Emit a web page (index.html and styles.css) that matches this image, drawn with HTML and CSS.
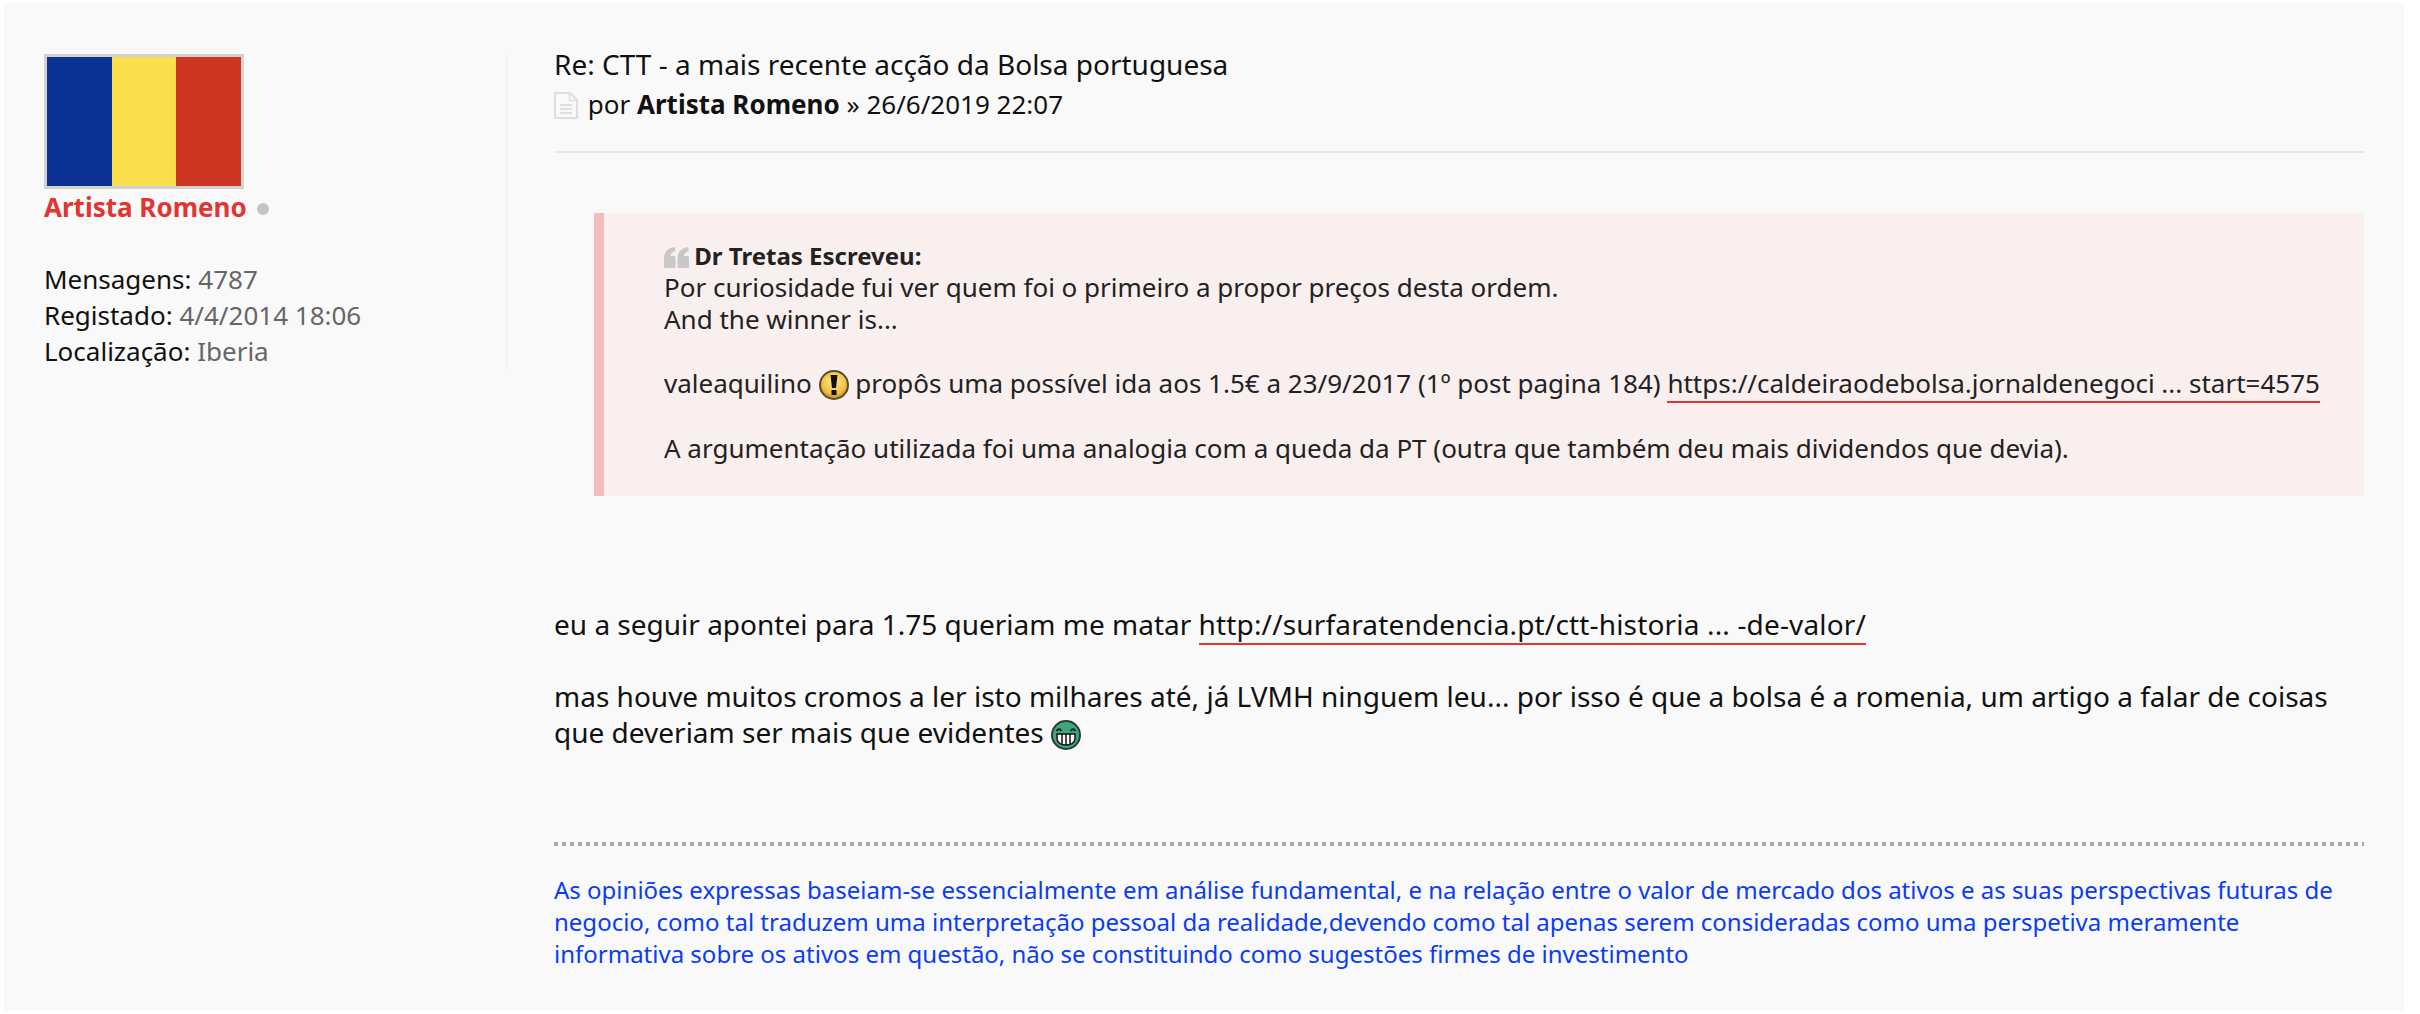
FILE: index.html
```html
<!DOCTYPE html>
<html lang="pt">
<head>
  <meta charset="UTF-8">
  <meta name="viewport" content="width=device-width, initial-scale=1.0">
  <title>Re: CTT - a mais recente acção da Bolsa portuguesa</title>
  <link rel="stylesheet" href="styles.css">
</head>
<body>
  <div class="post">
    <div class="profile">
      <div class="avatar">
        <span class="stripe blue"></span>
        <span class="stripe yellow"></span>
        <span class="stripe red"></span>
      </div>
      <div class="author"><a class="author-name">Artista Romeno</a><span class="status-dot"></span></div>
      <ul class="stats">
        <li>Mensagens: <span>4787</span></li>
        <li>Registado: <span>4/4/2014 18:06</span></li>
        <li>Localização: <span>Iberia</span></li>
      </ul>
    </div>

    <div class="post-main">
      <div class="post-head">
        <h3 class="post-title">Re: CTT - a mais recente acção da Bolsa portuguesa</h3>
        <p class="post-meta">
          <svg class="doc-icon" viewBox="0 0 24 27" width="24" height="27">
            <path d="M1 1h15l7 7v18H1z" fill="none" stroke="#dedede" stroke-width="2"/>
            <path d="M15.500 1v7.500h7.500" fill="none" stroke="#dedede" stroke-width="1.500"/>
            <path d="M6 13h12M6 17h12M6 21h12" stroke="#dedede" stroke-width="1.800"/>
          </svg>
          por <strong>Artista Romeno</strong> » 26/6/2019 22:07
        </p>
      </div>

      <blockquote class="quote">
        <cite class="quote-author">
          <svg class="quote-icon" viewBox="0 0 25 21" width="25" height="21">
            <path d="M0 12C0 6 3 1 11 0v4C8 5 6.500 7 6.500 9H10a1.500 1.500 0 0 1 1.500 1.500v9A1.500 1.500 0 0 1 10 21H1.500A1.500 1.500 0 0 1 0 19.500z" fill="#c8c8c8"/>
            <path d="M13.500 12c0-6 3-11 11-12v4c-3 1-4.500 3-4.500 5h3.500a1.500 1.500 0 0 1 1.500 1.500v9a1.500 1.500 0 0 1-1.500 1.500H15a1.500 1.500 0 0 1-1.500-1.500z" fill="#c8c8c8"/>
          </svg>
          Dr Tretas Escreveu:
        </cite>
        <div>Por curiosidade fui ver quem foi o primeiro a propor preços desta ordem.<br>
        And the winner is...<br><br>
        valeaquilino
        <svg class="smiley" viewBox="0 0 30 30" width="30" height="30">
          <defs>
            <radialGradient id="warn" cx="50%" cy="40%" r="60%">
              <stop offset="0" stop-color="#fdeb95"/>
              <stop offset="0.7" stop-color="#f3c040"/>
              <stop offset="1" stop-color="#b98722"/>
            </radialGradient>
          </defs>
          <circle cx="15" cy="15" r="14" fill="url(#warn)" stroke="#5e4a2c" stroke-width="2"/>
          <path d="M11.500 5h7l-1.500 13h-4z" fill="#111"/>
          <rect x="12.500" y="20" width="5" height="5" fill="#111"/>
        </svg>
        propôs uma possível ida aos 1.5€ a 23/9/2017 (1º post pagina 184) <a class="post-link">https://caldeiraodebolsa.jornaldenegoci ... start=4575</a><br><br>
        A argumentação utilizada foi uma analogia com a queda da PT (outra que também deu mais dividendos que devia).</div>
      </blockquote>

      <div class="post-body">
        eu a seguir apontei para 1.75 queriam me matar <a class="post-link">http://surfaratendencia.pt/ctt-historia ... -de-valor/</a><br><br>
        mas houve muitos cromos a ler isto milhares até, já LVMH ninguem leu... por isso é que a bolsa é a romenia, um artigo a falar de coisas que deveriam ser mais que evidentes
        <svg class="smiley" viewBox="0 0 30 30" width="30" height="30">
          <circle cx="15" cy="15" r="14" fill="#3fa77f" stroke="#2c3a36" stroke-width="2"/>
          <path d="M5.500 11q2.500-3.500 5 0M19.500 11q2.500-3.500 5 0" fill="none" stroke="#10201a" stroke-width="2"/>
          <path d="M6 14h18v5q-1 6-9 6t-9-6z" fill="#fff" stroke="#111" stroke-width="1.500"/>
          <path d="M11 14v10M15 14v11M19 14v10" stroke="#111" stroke-width="1.500"/>
        </svg>
      </div>

      <div class="signature">As opiniões expressas baseiam-se essencialmente em análise fundamental, e na relação entre o valor de mercado dos ativos e as suas perspectivas futuras de negocio, como tal traduzem uma interpretação pessoal da realidade,devendo como tal apenas serem consideradas como uma perspetiva meramente informativa sobre os ativos em questão, não se constituindo como sugestões firmes de investimento</div>
    </div>
  </div>
</body>
</html>
```

FILE: styles.css
```css
html {
  background: #fff;
}
body {
  font-family: "Noto Sans", sans-serif;
  color: #111;
  margin: 0;
  padding: 3px 16px 0 4px;
}
.post {
  display: flex;
  background: #f9f9f9;
  min-height: 1008px;
  box-sizing: border-box;
  padding: 44px 40px 0 40px;
}
.profile {
  flex: none;
  align-self: flex-start;
  box-sizing: border-box;
  width: 464px;
  margin-top: 6px;
  border-right: 2px solid #f2f2f2;
}
.avatar {
  display: flex;
  width: 200px;
  height: 135px;
  box-sizing: border-box;
  border: 3px solid #d2d2d2;
  margin-top: 1px;
}
.stripe {
  flex: 1;
}
.stripe.blue {
  background: #0b3192;
}
.stripe.yellow {
  background: #fbdf4e;
}
.stripe.red {
  background: #cb3521;
}
.author {
  display: flex;
  align-items: center;
  font-size: 26px;
  line-height: 36px;
  font-weight: 700;
  color: #e03531;
}
.status-dot {
  width: 12px;
  height: 12px;
  border-radius: 50%;
  background: #c4c4c4;
  margin: 3px 0 0 10px;
}
.stats {
  list-style: none;
  margin: 36px 0 0;
  padding: 0;
  font-size: 26px;
  line-height: 36px;
}
.stats span {
  color: #666;
}
.post-main {
  flex: 1;
  min-width: 0;
  padding-left: 46px;
}
.post-head {
  height: 104px;
  border-bottom: 2px solid #e8e8e8;
}
.post-title {
  margin: 0;
  font-size: 28px;
  font-weight: 400;
  line-height: 34px;
}
.post-meta {
  margin: 5px 0 0;
  font-size: 26px;
  line-height: 36px;
}
.doc-icon {
  vertical-align: -5px;
  margin-right: 3px;
}
.quote {
  margin: 60px 0 0 40px;
  padding: 27px 40px 32px 60px;
  background: #f9efef;
  border-left: 10px solid #f0bcbc;
  font-size: 26px;
  line-height: 32px;
  color: #222;
}
.quote-author {
  display: block;
  height: 31px;
  font-style: normal;
  font-weight: 700;
  font-size: 24px;
}
.quote-icon {
  vertical-align: -3px;
  margin-right: -1px;
}
.smiley {
  vertical-align: -7px;
}
.post-link {
  color: inherit;
  border-bottom: 2px solid #e03531;
}
.post-body {
  margin-top: 110px;
  font-size: 28px;
  line-height: 36px;
}
.post-body .post-link {
  letter-spacing: 0.16px;
}
.signature {
  margin-top: 92px;
  padding-top: 32px;
  background: linear-gradient(90deg, #aaa 4px, transparent 4px) 0 0 / 8px 4px repeat-x;
  font-size: 24px;
  line-height: 32px;
  color: #0a3cf5;
}
```
